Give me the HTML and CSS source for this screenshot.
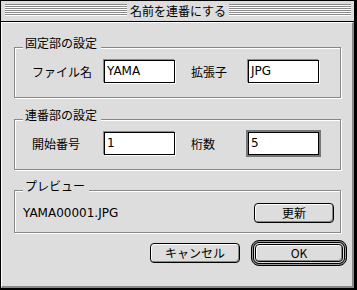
FILE: index.html
```html
<!DOCTYPE html>
<html lang="ja">
<head>
<meta charset="utf-8">
<title>名前を連番にする</title>
<link rel="stylesheet" href="styles.css">
</head>
<body>
<div class="window">
  <div class="titlebar">
    <div class="stripes"></div>
    <div class="title">名前を連番にする</div>
    <div class="stripes"></div>
  </div>
  <div class="panel">
    <div class="group g-fixed">
      <div class="legend">固定部の設定</div>
      <div class="row">
        <div class="label">ファイル名</div>
        <div class="field">YAMA</div>
        <div class="label label-2">拡張子</div>
        <div class="field">JPG</div>
      </div>
    </div>
    <div class="group g-seq">
      <div class="legend">連番部の設定</div>
      <div class="row">
        <div class="label">開始番号</div>
        <div class="field">1</div>
        <div class="label label-2">桁数</div>
        <div class="field focus">5</div>
      </div>
    </div>
    <div class="group g-preview">
      <div class="legend">プレビュー</div>
      <div class="preview-row">
        <div class="preview-name">YAMA00001.JPG</div>
        <div class="btn btn-update">更新</div>
      </div>
    </div>
    <div class="buttons">
      <div class="btn btn-cancel">キャンセル</div>
      <div class="ring"><div class="btn btn-ok">OK</div></div>
    </div>
  </div>
</div>
</body>
</html>
```
FILE: styles.css
```css
html {
  background: #000;
}
body {
  margin: 0;
  font: 12px/16px "DejaVu Sans", "Noto Sans CJK JP", sans-serif;
  color: #000;
}
.window {
  width: 355px;
  height: 289px;
  box-sizing: border-box;
  border: 1px solid #000;
  background: #ddd;
  display: flex;
  flex-direction: column;
}
.titlebar {
  height: 21px;
  box-sizing: border-box;
  border-bottom: 1px solid #000;
  display: flex;
  padding: 0 3px 0 4px;
  background: #ddd;
}
.stripes {
  flex: 1;
  height: 12px;
  margin-top: 3px;
  background: repeating-linear-gradient(to bottom, #888 0 1px, #fff 1px 2px);
}
.title {
  padding: 0 3px;
  line-height: 20px;
  font-family: "Noto Sans CJK JP", sans-serif;
}
.panel {
  flex: 1;
  border-left: 1px solid #fff;
  border-top: 1px solid #fff;
  border-right: 2px solid #888;
  border-bottom: 2px solid #888;
  padding: 0 5px 0 12px;
}
.group {
  position: relative;
  width: 327px;
  box-sizing: border-box;
  border: 1px solid #888;
  box-shadow: 1px 1px 0 #fff, inset 1px 1px 0 #fff;
  padding: 12px 6px 0 17px;
}
.g-fixed {
  margin-top: 24px;
  height: 51px;
}
.g-seq {
  margin-top: 21px;
  height: 51px;
}
.g-preview {
  margin-top: 20px;
  height: 43px;
  padding: 12px 6px 0 8px;
}
.legend {
  position: absolute;
  top: -13px;
  left: 8px;
  padding: 0 4px 0 2px;
  background: #ddd;
  line-height: 16px;
  font-family: "Noto Sans CJK JP", sans-serif;
}
.row {
  display: flex;
  align-items: center;
  height: 23px;
}
.label {
  width: 72px;
  font-family: "Noto Sans CJK JP", sans-serif;
}
.label-2 {
  width: 57px;
  margin-left: 16px;
}
.field {
  width: 71px;
  height: 23px;
  box-sizing: border-box;
  border: 1px solid #000;
  background: #fff;
  box-shadow: -1px -1px 0 #888, 1px 1px 0 #fff;
  padding: 0 2px;
  line-height: 21px;
}
.field.focus {
  box-shadow: 0 0 0 2px #777;
}
.preview-row {
  display: flex;
  align-items: center;
  justify-content: space-between;
  height: 20px;
}
.btn {
  box-sizing: border-box;
  height: 20px;
  border: 1px solid #000;
  border-radius: 4px;
  background: #ddd;
  box-shadow: inset 1px 1px 0 #fff, inset -1px -1px 0 #888;
  display: flex;
  align-items: center;
  justify-content: center;
  font-family: "Noto Sans CJK JP", sans-serif;
}
.btn-update {
  width: 80px;
}
.buttons {
  display: flex;
  justify-content: flex-end;
  align-items: center;
  margin-top: 7px;
}
.btn-cancel {
  width: 90px;
}
.ring {
  width: 96px;
  height: 26px;
  box-sizing: border-box;
  border: 1px solid #000;
  border-radius: 8px;
  box-shadow: inset 0 0 0 1px #999, inset 0 0 0 2px #000;
  padding: 3px;
  margin-left: 11px;
}
.btn-ok {
  width: 100%;
  height: 100%;
}
```
